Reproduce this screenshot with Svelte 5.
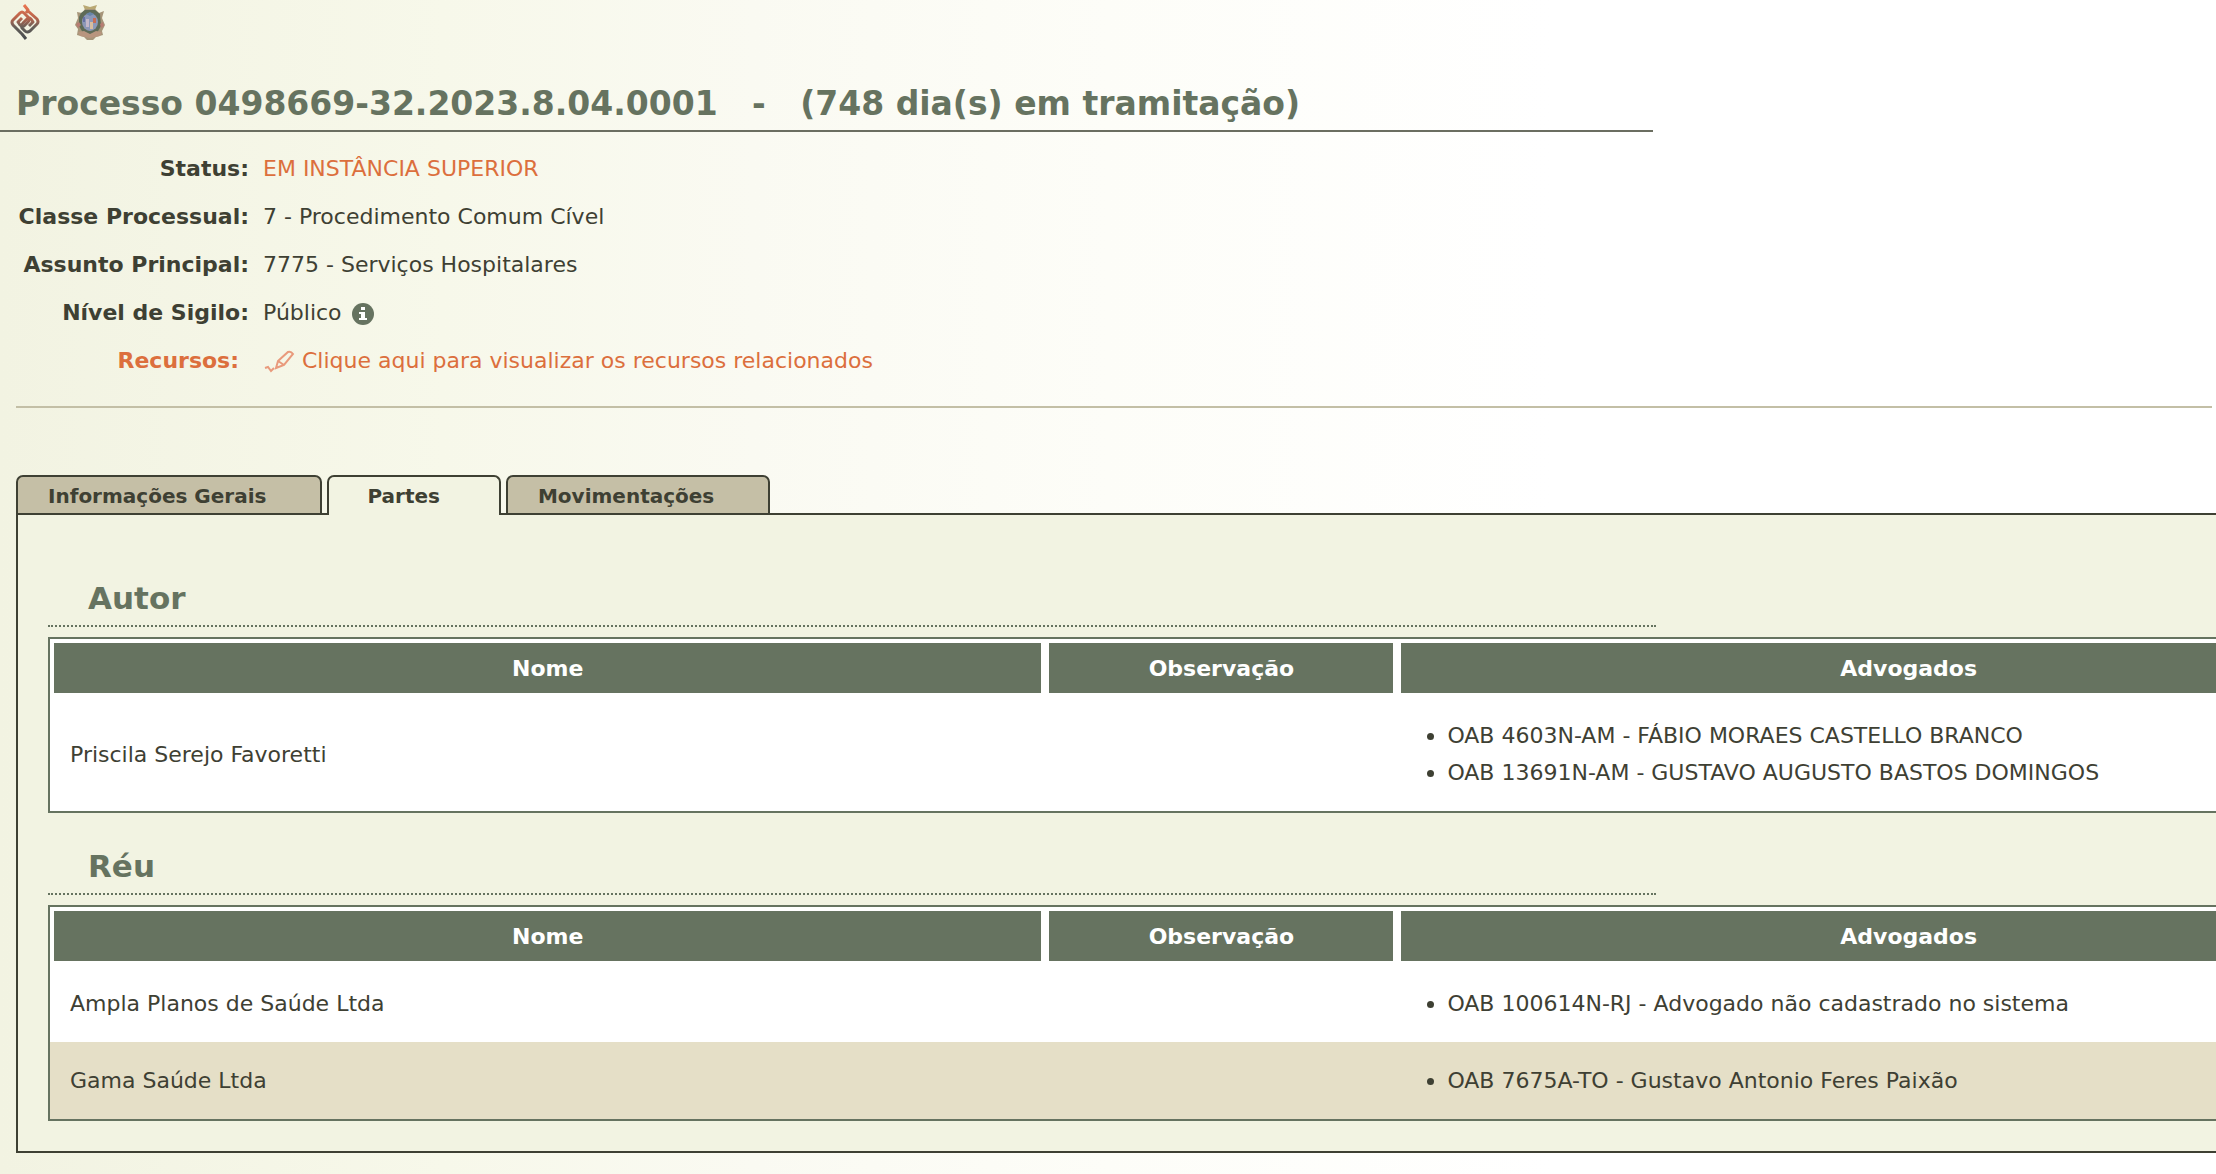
<script lang="ts">
    const fields = [
        { label: 'Classe Processual:', value: '7 - Procedimento Comum Cível' },
        { label: 'Assunto Principal:', value: '7775 - Serviços Hospitalares' },
    ];

    const tabs = ['Informações Gerais', 'Partes', 'Movimentações'];

    const groups = [
        {
            title: 'Autor',
            parties: [
                {
                    name: 'Priscila Serejo Favoretti',
                    note: '',
                    lawyers: [
                        'OAB 4603N-AM - FÁBIO MORAES CASTELLO BRANCO',
                        'OAB 13691N-AM - GUSTAVO AUGUSTO BASTOS DOMINGOS',
                    ],
                },
            ],
        },
        {
            title: 'Réu',
            parties: [
                {
                    name: 'Ampla Planos de Saúde Ltda',
                    note: '',
                    lawyers: ['OAB 100614N-RJ - Advogado não cadastrado no sistema'],
                },
                {
                    name: 'Gama Saúde Ltda',
                    note: '',
                    lawyers: ['OAB 7675A-TO - Gustavo Antonio Feres Paixão'],
                },
            ],
        },
    ];

    let active = $state('Partes');
</script>

<div class="page">
    <header class="brand">
        <a href="#projudi" aria-label="Projudi">
            <svg width="30" height="36" viewBox="0 0 30 36" fill="none" stroke-width="3" stroke-linejoin="round">
                <defs>
                    <linearGradient id="knot" gradientUnits="userSpaceOnUse" x1="0" y1="0" x2="0" y2="36">
                        <stop offset="0" stop-color="#ee7650" />
                        <stop offset="0.4" stop-color="#b5634c" />
                        <stop offset="0.65" stop-color="#66605a" />
                        <stop offset="1" stop-color="#42474a" />
                    </linearGradient>
                </defs>
                <g stroke="url(#knot)">
                    <path d="M16 35 L12 30 L3 21 Q1 18 3 16 L10 9 Q12 7 14 9 L18 13 Q20 16 18 18 L14 22 Q12 23 10 21 L8 18 L12 14" />
                    <path d="M14 1 L18 6 L16 9 M18 7 L27 15 Q29 18 27 20 L20 27 Q17 29 15 27 L12 24 Q11 21 13 19 L17 15 Q19 13 21 15 L23 18 L19 22" />
                </g>
            </svg>
        </a>
        <a href="#tribunal" aria-label="Tribunal de Justiça">
            <svg width="32" height="36" viewBox="0 0 32 36">
                <path d="M9 1 L16 3 L23 1 L21 6 H11Z" fill="#b9a873" />
                <path d="M3 8 L8 9 L11 5 H21 L25 9 L30 7 L28 14 L31 21 L28 27 L29 31 L22 33 L19 36 H13 L10 33 L3 31 L4 25 L1 21 L4 14Z" fill="#a69579" />
                <path d="M7 9 L11 6 H21 L26 10 L27 22 L23 29 L16 32 L9 29 L5 22 L5 13Z" fill="#5e6b57" />
                <ellipse cx="16" cy="18" rx="8" ry="9" fill="#8c98b8" />
                <path d="M12 10 L16 8 L20 10 L16 12Z" fill="#6685a8" />
                <path d="M12 15 H15 V23 H12Z" fill="#c3b8ca" />
                <path d="M19 14 H22 V19 H19Z" fill="#c66d56" />
                <path d="M16 18 H19 V25 H16Z" fill="#d7bd9f" />
                <path d="M9 13 H11 V18 H9Z" fill="#6570a4" />
                <path d="M4 28 L10 27 L16 30 L22 27 L28 28 L26 32 L16 34 L6 32Z" fill="#b8957e" />
                <path d="M2 20 L5 18 L7 21 L4 24Z M26 20 L29 18 L30 22 L27 24Z" fill="#b77d72" />
            </svg>
        </a>
    </header>

    <h1>Processo 0498669-32.2023.8.04.0001 &nbsp; - &nbsp; (748 dia(s) em tramitação)</h1>

    <dl class="summary">
        <dt>Status:</dt>
        <dd class="highlight">EM INSTÂNCIA SUPERIOR</dd>
        {#each fields as field}
            <dt>{field.label}</dt>
            <dd>{field.value}</dd>
        {/each}
        <dt>Nível de Sigilo:</dt>
        <dd>
            Público
            <svg class="info" width="24" height="24" viewBox="0 0 24 24" aria-hidden="true">
                <circle cx="12" cy="12" r="11" fill="#667360" />
                <path d="M10 5 H14 V8 H10Z M8 10 H14 V16 H16 V18 H8 V16 H10 V12 H8Z" fill="#fff" />
            </svg>
        </dd>
        <dt class="highlight inset">Recursos:</dt>
        <dd>
            <a class="highlight" href="#recursos">
                <svg class="pencil" width="32" height="24" viewBox="0 0 32 24" fill="none" stroke="#e99a7c" stroke-width="2" aria-hidden="true">
                    <path d="M2 18 L5 17 L8 21 L11 18" />
                    <path d="M15 11 L25 2 Q28 1 30 4 L21 15 L13 18Z M15 11 L21 15" />
                </svg>
                Clique aqui para visualizar os recursos relacionados
            </a>
        </dd>
    </dl>

    <hr />

    <div class="tabs" role="tablist">
        {#each tabs as tab}
            <button class="tab" class:active={tab === active} role="tab" aria-selected={tab === active} onclick={() => (active = tab)}>
                {tab}
            </button>
        {/each}
    </div>

    <section class="panel">
        {#if active === 'Partes'}
            {#each groups as group}
                <h2>{group.title}</h2>
                <table>
                    <colgroup>
                        <col class="col-name" />
                        <col class="col-note" />
                        <col />
                    </colgroup>
                    <thead>
                        <tr>
                            <th>Nome</th>
                            <th>Observação</th>
                            <th>Advogados</th>
                        </tr>
                    </thead>
                    <tbody>
                        {#each group.parties as party}
                            <tr>
                                <td>{party.name}</td>
                                <td>{party.note}</td>
                                <td>
                                    <ul>
                                        {#each party.lawyers as lawyer}
                                            <li>{lawyer}</li>
                                        {/each}
                                    </ul>
                                </td>
                            </tr>
                        {/each}
                    </tbody>
                </table>
            {/each}
        {/if}
    </section>
</div>

<style>
    :global(body) {
        background: #fff;
    }

    .page {
        min-height: 100vh;
        box-sizing: border-box;
        overflow-x: hidden;
        color: #3e4033;
        font-family: Verdana, "DejaVu Sans", sans-serif;
        font-size: 22px;
        background: linear-gradient(to right, #f2f3e2 0%, #f7f8ea 20%, #fafaf2 34%, #fdfdf8 50%, #fff 70%);
    }

    .brand {
        display: flex;
        gap: 34px;
        padding: 4px 10px 0;
    }

    .brand a,
    .brand svg {
        display: block;
    }

    h1 {
        width: 1653px;
        max-width: 100%;
        margin: 40px 0 0;
        padding: 0 16px 2px;
        box-sizing: border-box;
        border-bottom: 2px solid #6b6e61;
        color: #667360;
        font-size: 33px;
        line-height: 48px;
    }

    .summary {
        display: grid;
        grid-template-columns: 249px 1fr;
        column-gap: 14px;
        margin: 13px 0 21px;
        line-height: 48px;
    }

    dt {
        font-weight: bold;
        text-align: right;
    }

    dd {
        margin: 0;
    }

    .inset {
        padding-right: 10px;
    }

    .highlight {
        color: #dc6f3d;
        text-decoration: none;
    }

    .info,
    .pencil {
        vertical-align: middle;
    }

    .info {
        margin-left: 2px;
    }

    hr {
        height: 2px;
        margin: 0 4px 0 16px;
        border: 0;
        background: #c3bfa6;
    }

    .tabs {
        display: flex;
        gap: 5px;
        margin: 67px 0 -2px 16px;
    }

    .tab {
        height: 40px;
        padding: 4px 54px 2px 30px;
        border: 2px solid #3e4033;
        border-radius: 7px 7px 0 0;
        color: #3e4033;
        background: #c5bfa6;
        font-family: inherit;
        font-size: 20px;
        font-weight: bold;
        cursor: pointer;
    }

    .tab.active {
        position: relative;
        padding: 4px 59px 4px 38px;
        border-bottom: 0;
        background: #f2f3e2;
    }

    /* the tables run past the right edge of the window */
    .panel {
        margin: 0 -238px 0 16px;
        padding: 58px 30px 30px;
        border: 2px solid #3e4033;
        background: #f2f3e2;
    }

    h2 {
        width: 1608px;
        margin: 0 0 10px;
        padding: 0 40px 2px;
        box-sizing: border-box;
        border-bottom: 2px dotted #667360;
        color: #667360;
        font-size: 31px;
        line-height: 50px;
    }

    table {
        width: 100%;
        border: 2px solid #667360;
        border-spacing: 0;
        table-layout: fixed;
        background: #fff;
    }

    table + h2 {
        margin-top: 28px;
    }

    .col-name {
        width: 42%;
    }

    .col-note {
        width: 352px;
    }

    th {
        height: 50px;
        padding: 0;
        border: 4px solid #fff;
        color: #fff;
        background: #667360;
    }

    td {
        padding: 20px;
        line-height: 37px;
    }

    tbody tr:nth-child(even) {
        background: #e5dfc7;
    }

    ul {
        margin: 0;
        padding-left: 30px;
    }
</style>
